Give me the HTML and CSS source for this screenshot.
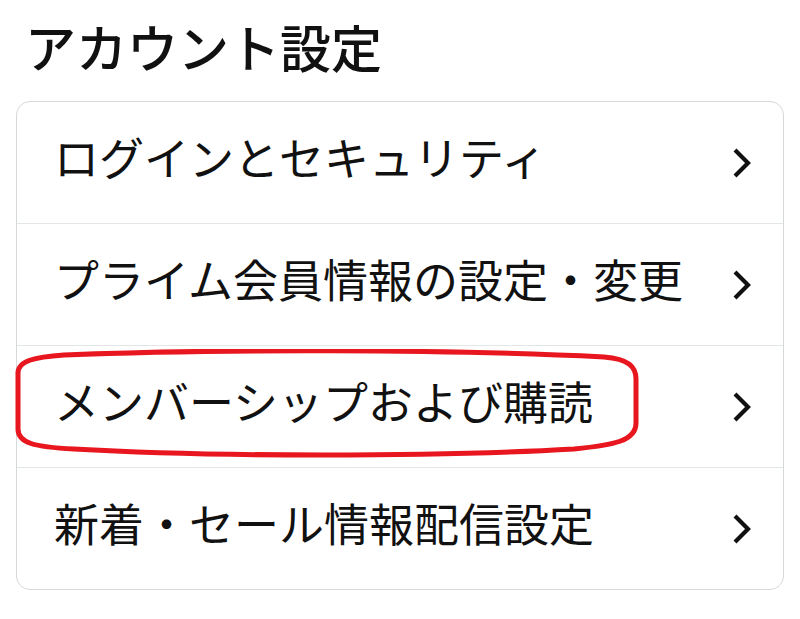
FILE: index.html
```html
<!DOCTYPE html>
<html lang="ja">
<head>
    <meta charset="UTF-8">
    <meta name="viewport" content="width=device-width, initial-scale=1.0">
    <title>アカウント設定</title>
    <link rel="stylesheet" href="styles.css">
</head>
<body>
    <div class="page">
        <h1 class="page-title">アカウント設定</h1>
        <ul class="settings-list">
            <li><a href="#login"><span class="label">ログインとセキュリティ</span><svg class="chevron" viewBox="0 0 20 32"><polyline points="3,3 16,16 3,29"/></svg></a></li>
            <li><a href="#prime"><span class="label">プライム会員情報の設定・変更</span><svg class="chevron" viewBox="0 0 20 32"><polyline points="3,3 16,16 3,29"/></svg></a></li>
            <li><a href="#membership"><span class="label">メンバーシップおよび購読</span><svg class="chevron" viewBox="0 0 20 32"><polyline points="3,3 16,16 3,29"/></svg></a></li>
            <li><a href="#notify"><span class="label">新着・セール情報配信設定</span><svg class="chevron" viewBox="0 0 20 32"><polyline points="3,3 16,16 3,29"/></svg></a></li>
        </ul>
        <!-- red hand-drawn highlight around the 3rd row -->
        <svg class="highlight" viewBox="0 0 630 112">
            <path d="M4,24 C4,12 20,8 50,6 C200,0 430,0 590,8 C615,10 622,18 622,30 L622,74 C622,92 600,96 560,100 C420,108 200,108 60,100 C20,98 4,94 4,80 Z"/>
        </svg>
    </div>
</body>
</html>
```

FILE: styles.css
```css
body {
    margin: 0;
    padding: 0;
    background-color: #fff;
    color: #111;
    font-family: "Noto Sans CJK JP", "Noto Sans", sans-serif;
}
.page {
    position: relative;
    padding: 16px 16px 0;
}
.page-title {
    margin: 0 0 25px;
    padding-left: 9px;
    font-size: 51px;
    line-height: 60px;
    font-weight: 500;
}
.settings-list {
    list-style: none;
    margin: 0;
    padding: 0;
    border: 1px solid #d5d9d9;
    border-radius: 14px;
}
.settings-list li + li {
    border-top: 1px solid #e3e6e6;
}
.settings-list a {
    display: flex;
    align-items: center;
    justify-content: space-between;
    height: 121px;
    padding: 0 31px 0 37px;
    color: #111;
    text-decoration: none;
    font-size: 45px;
}
.label {
    margin-bottom: 12px;
}
.chevron {
    width: 20px;
    height: 32px;
    fill: none;
    stroke: #111;
    stroke-width: 4.2;
}
.highlight {
    position: absolute;
    left: 14px;
    top: 349px;
    width: 630px;
    height: 112px;
    fill: none;
    stroke: #e8161e;
    stroke-width: 5;
}
```
